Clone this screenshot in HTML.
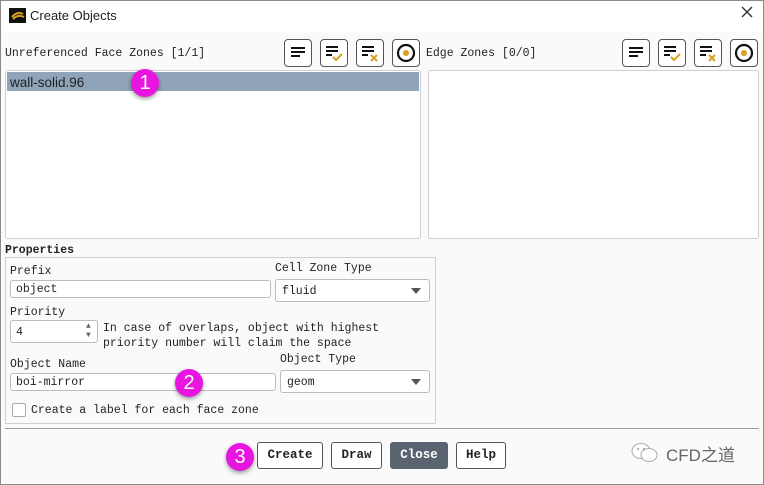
<!DOCTYPE html>
<html><head><style>
*{box-sizing:border-box;margin:0;padding:0}
body{width:764px;height:485px;background:#fff;font-family:"Liberation Mono",monospace;font-size:11.5px;color:#222;position:relative;overflow:hidden}
.a{position:absolute}
.win{left:0;top:0;width:764px;height:485px;border:1px solid #8a8a8a;background:#fafafa}
.title{left:1px;top:1px;width:762px;height:31px;background:#fff}
.ib{width:28px;height:28px;border:1px solid #555;border-radius:4px;background:#fff}
.inp{border:1px solid #bcbcbc;border-radius:3px;background:#fff;padding-left:5px;line-height:16px}
.sel{border:1px solid #bcbcbc;border-radius:3px;background:#fff;padding-left:6px}
.btn{border:1px solid #555;border-radius:3px;background:#fff;font-weight:bold;text-align:center;line-height:25px;height:27px;font-size:12.5px}
.badge{width:28px;height:28px;border-radius:50%;background:#e815e0;color:#fff;font-family:"Liberation Sans",sans-serif;font-size:20px;text-align:center;line-height:28px;box-shadow:0 2px 4px rgba(0,0,0,.4)}
.tri{width:0;height:0;border-left:5px solid transparent;border-right:5px solid transparent;border-top:6px solid #555}
</style></head><body>
<div class="a win"></div>
<div class="a title"></div>
<div class="a" style="left:9px;top:8px;width:17px;height:15px;background:#111"><svg width="17" height="15"><path d="M3 9 Q8 3 14 6 M4 11 Q9 6 15 9" stroke="#d9a020" stroke-width="2" fill="none"/></svg></div>
<div class="a" style="left:30px;top:8px;font-family:'Liberation Sans',sans-serif;font-size:13px">Create Objects</div>
<div class="a" style="left:741px;top:6px"><svg width="12" height="12"><path d="M1 1L11 11M11 1L1 11" stroke="#333" stroke-width="1.4"/></svg></div>

<div class="a" style="left:5px;top:47px">Unreferenced Face Zones [1/1]</div>
<div class="a" style="left:426px;top:47px">Edge Zones [0/0]</div>

<div class="a ib" style="left:284px;top:39px"><svg width="26" height="26"><path d="M6 8h14M6 12h14M6 16h9" stroke="#111" stroke-width="2"/></svg></div>
<div class="a ib" style="left:320px;top:39px"><svg width="26" height="26"><path d="M5 7h12M5 11h12M5 15h6" stroke="#111" stroke-width="2"/><path d="M12 17l3 3 6-6" stroke="#d9a020" stroke-width="2" fill="none"/></svg></div>
<div class="a ib" style="left:356px;top:39px"><svg width="26" height="26"><path d="M5 7h12M5 11h12M5 15h6" stroke="#111" stroke-width="2"/><path d="M14 15l6 6M20 15l-6 6" stroke="#d9a020" stroke-width="2"/></svg></div>
<div class="a ib" style="left:392px;top:39px"><svg width="26" height="26"><circle cx="13" cy="13" r="8" stroke="#111" stroke-width="2.2" fill="none"/><circle cx="13" cy="13" r="3" fill="#d9a020"/></svg></div>
<div class="a ib" style="left:622px;top:39px"><svg width="26" height="26"><path d="M6 8h14M6 12h14M6 16h9" stroke="#111" stroke-width="2"/></svg></div>
<div class="a ib" style="left:658px;top:39px"><svg width="26" height="26"><path d="M5 7h12M5 11h12M5 15h6" stroke="#111" stroke-width="2"/><path d="M12 17l3 3 6-6" stroke="#d9a020" stroke-width="2" fill="none"/></svg></div>
<div class="a ib" style="left:694px;top:39px"><svg width="26" height="26"><path d="M5 7h12M5 11h12M5 15h6" stroke="#111" stroke-width="2"/><path d="M14 15l6 6M20 15l-6 6" stroke="#d9a020" stroke-width="2"/></svg></div>
<div class="a ib" style="left:730px;top:39px"><svg width="26" height="26"><circle cx="13" cy="13" r="8" stroke="#111" stroke-width="2.2" fill="none"/><circle cx="13" cy="13" r="3" fill="#d9a020"/></svg></div>

<div class="a" style="left:5px;top:70px;width:416px;height:169px;border:1px solid #cfcfcf;border-radius:3px;background:#fff"></div>
<div class="a" style="left:7px;top:72px;width:412px;height:19px;background:#8fa4b8;font-family:'Liberation Sans',sans-serif;font-size:13.5px;line-height:21px;padding-left:3px">wall-solid.96</div>
<div class="a" style="left:428px;top:70px;width:331px;height:169px;border:1px solid #cfcfcf;border-radius:3px;background:#fff"></div>

<div class="a" style="left:5px;top:244px;font-weight:bold">Properties</div>
<div class="a" style="left:5px;top:257px;width:431px;height:167px;border:1px solid #cfcfcf"></div>

<div class="a" style="left:10px;top:265px">Prefix</div>
<div class="a inp" style="left:10px;top:280px;width:261px;height:18px;line-height:18px">object</div>
<div class="a" style="left:275px;top:262px">Cell Zone Type</div>
<div class="a sel" style="left:275px;top:279px;width:155px;height:23px;line-height:23px">fluid</div>
<div class="a tri" style="left:411px;top:288px"></div>

<div class="a" style="left:10px;top:306px">Priority</div>
<div class="a inp" style="left:10px;top:320px;width:88px;height:23px;line-height:23px">4</div>
<div class="a" style="left:86px;top:322px;font-size:8px;color:#666;line-height:9px">▲<br>▼</div>
<div class="a" style="left:103px;top:321px;line-height:15px">In case of overlaps, object with highest<br>priority number will claim the space</div>

<div class="a" style="left:10px;top:358px">Object Name</div>
<div class="a inp" style="left:10px;top:373px;width:266px;height:18px;line-height:18px">boi-mirror</div>
<div class="a" style="left:280px;top:353px">Object Type</div>
<div class="a sel" style="left:280px;top:370px;width:150px;height:23px;line-height:23px">geom</div>
<div class="a tri" style="left:411px;top:379px"></div>

<div class="a" style="left:12px;top:403px;width:14px;height:14px;border:1px solid #aaa;border-radius:2px;background:#fff"></div>
<div class="a" style="left:31px;top:404px">Create a label for each face zone</div>

<div class="a" style="left:5px;top:428px;width:754px;height:1px;background:#999"></div>

<div class="a btn" style="left:257px;top:442px;width:66px">Create</div>
<div class="a btn" style="left:331px;top:442px;width:51px">Draw</div>
<div class="a btn" style="left:390px;top:442px;width:58px;background:#5a6470;border-color:#5a6470;color:#fff">Close</div>
<div class="a btn" style="left:456px;top:442px;width:50px">Help</div>

<div class="a" style="left:629px;top:441px"><svg width="32" height="24"><ellipse cx="12" cy="10" rx="9" ry="7.5" stroke="#aaa" fill="#fff"/><ellipse cx="20" cy="14" rx="8" ry="6.5" stroke="#aaa" fill="#fff"/><circle cx="9" cy="8" r="1" fill="#999"/><circle cx="15" cy="8" r="1" fill="#999"/></svg></div>
<div class="a" style="left:666px;top:441px;font-family:'Liberation Sans','Noto Sans CJK SC',sans-serif;font-size:17px;color:#666">CFD之道</div>

<div class="a badge" style="left:131px;top:69px">1</div>
<div class="a badge" style="left:175px;top:369px">2</div>
<div class="a badge" style="left:226px;top:443px">3</div>
</body></html>
